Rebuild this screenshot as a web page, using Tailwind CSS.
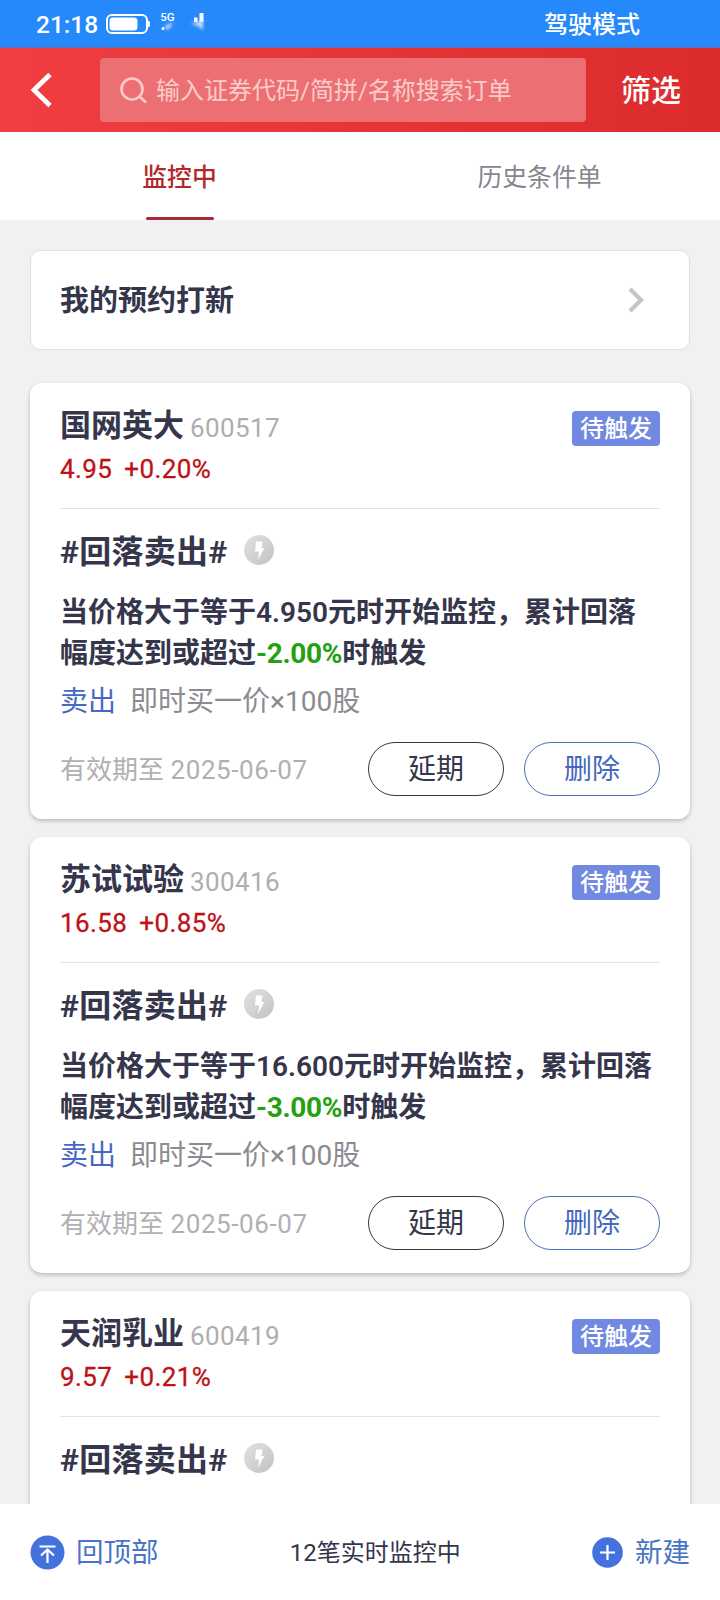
<!DOCTYPE html>
<html lang="zh-CN">
<head>
<meta charset="utf-8">
<meta name="viewport" content="width=720">
<title>条件单</title>
<script src="https://cdn.jsdelivr.net/npm/@tailwindcss/browser@4"></script>
</head>
<body class="w-[720px] h-[1600px] overflow-hidden bg-[#f1f0f2] flex flex-col font-[Roboto,'Noto_Sans_CJK_SC',sans-serif] text-[#35364b] whitespace-nowrap">

<!-- status bar -->
<header class="h-12 shrink-0 bg-[#2589fb] text-white flex items-center pl-9 pr-[80px] border-b border-[#5f6fb8]">
  <span class="pt-[3px] text-[24.500px] leading-none font-medium w-[70px]">21:18</span>
  <svg class="mt-px w-[46px] h-[22px]" viewBox="0 0 46 22" fill="none">
    <rect x="1" y="2" width="40" height="18" rx="5" stroke="#fff" stroke-width="2"/>
    <rect x="3.500" y="4.500" width="28" height="13" rx="3.500" fill="#fff"/>
    <path d="M42.500 8.500h.8v5h-.8z" fill="#fff" stroke="#fff"/>
  </svg>
  <svg class="ml-2 w-[50px] h-[28px]" viewBox="0 0 50 28">
    <defs><filter id="soft" x="-50%" y="-50%" width="200%" height="200%"><feGaussianBlur stdDeviation="1.600"/></filter></defs>
    <text x="0.300" y="11" font-size="11.500" font-weight="500" fill="#fff" font-family="Roboto">5G</text>
    <circle cx="3" cy="18.500" r="1.500" fill="#fff"/>
    <path d="M4 17 12 12 11 17 7 20z" fill="#b9d5f7" filter="url(#soft)"/>
    <path d="M34 7.500h3.500V12H34zM39.500 3h4v9h-4z" fill="#fff"/>
    <path d="M31 14 43 10 43 20 38 16z" fill="#c8dcf5" filter="url(#soft)"/>
  </svg>
  <span class="ml-auto pt-[2px] text-2xl leading-none font-medium">驾驶模式</span>
</header>

<!-- search bar -->
<div class="h-[84px] shrink-0 bg-linear-to-r from-[#f03e42] to-[#db2b2d] flex items-center">
  <div class="w-[100px] pl-[30px]">
    <svg class="w-6 h-9" viewBox="0 0 24 36" fill="none" stroke="#fff" stroke-width="4.800"><path d="M20 2.500 4 18l16 15.500"/></svg>
  </div>
  <div class="w-[486px] h-16 rounded bg-[#ec7073] flex items-center pl-[19px] text-[#fbccca]">
    <svg class="w-7 h-7 mr-[9px]" viewBox="0 0 28 28" fill="none" stroke="currentColor" stroke-width="2.600"><circle cx="13" cy="13" r="10.500"/><path d="m20.500 20.500 6.500 6"/></svg>
    <span class="pt-[2px] text-2xl leading-none">输入证券代码/简拼/名称搜索订单</span>
  </div>
  <span class="ml-[35px] pt-[2px] text-[30px] leading-none font-medium text-white">筛选</span>
</div>

<!-- tabs -->
<nav class="h-[88px] shrink-0 bg-white grid grid-cols-2 text-[24.800px]">
  <div class="flex flex-col items-center text-[#b3272b] font-medium">
    <span class="h-[85px] pr-px leading-[91px]">监控中</span>
    <i class="w-[68px] h-[3px] rounded-full bg-[#a82a38]"></i>
  </div>
  <div class="h-[88px] pr-px text-center text-[#85868f] leading-[91px]">历史条件单</div>
</nav>

<main class="flex-1 min-h-0 overflow-hidden pt-[30px] px-[30px]">
  <div class="h-[100px] mb-[33px] rounded-[10px] bg-white border border-[#dedee1] flex items-center justify-between pl-[29px] pr-[45px]">
    <span class="pt-[2px] text-[29px] leading-none font-bold">我的预约打新</span>
    <svg class="w-4 h-[26px]" viewBox="0 0 16 26" fill="none" stroke="#c5c5c7" stroke-width="4.200"><path d="m2 2 11 11L2 24"/></svg>
  </div>
  <div id="orders" class="flex flex-col gap-[18px]"></div>
</main>

<!-- bottom bar -->
<footer class="h-24 shrink-0 bg-white flex items-center justify-between px-[30px] text-[27.500px] leading-9 text-[#4a74c4]">
  <div class="flex items-center gap-[11px]">
    <svg class="w-[35px] h-[35px]" viewBox="0 0 35 35"><circle cx="17.500" cy="17.500" r="17" fill="#4472dd"/><path d="M9.500 11.500h16M17.500 28V15M11 20.500l6.500-6 6.500 6" fill="none" stroke="#fff" stroke-width="2.200"/></svg>
    <span class="pt-[2px]">回顶部</span>
  </div>
  <span class="pt-[2px] text-2xl leading-9 text-[#35364b]">12笔实时监控中</span>
  <div class="flex items-center gap-3">
    <svg class="w-[31px] h-[31px]" viewBox="0 0 31 31"><circle cx="15.500" cy="15.500" r="15.300" fill="#4472dd"/><path d="M8 15.500h15M15.500 8v15" stroke="#fff" stroke-width="2.200"/></svg>
    <span class="pt-[2px]">新建</span>
  </div>
</footer>

<template id="order">
  <article class="h-[436px] shrink-0 rounded-xl bg-white px-[30px] pt-[25px] shadow-[0_2px_4px_rgba(0,0,0,0.22)]">
    <div class="h-9 flex items-center">
      <span data-f="name" class="text-[31px] leading-9 font-bold"></span>
      <span data-f="code" class="ml-[6px] pt-[3px] text-[26px] leading-9 tracking-[0.4px] text-[#aeaeb1]"></span>
      <span class="ml-auto mt-[5px] w-[88px] h-[35px] rounded bg-[#7189e0] text-white text-2xl leading-[36px] font-medium text-center">待触发</span>
    </div>
    <div class="h-[64px] pt-[7px] text-[26px] leading-9 tracking-[0.4px] text-[#bd1218] [-webkit-text-stroke:0.3px_#bd1218] flex gap-3"><span data-f="price"></span><span data-f="change"></span></div>
    <div class="h-px bg-[#e2e2e4]"></div>
    <div class="h-[82px] flex items-center gap-[17px]">
      <span class="pt-[3px] text-[32px] leading-none tracking-[0.25px] font-bold">#回落卖出#</span>
      <svg class="w-[30px] h-[30px]" viewBox="0 0 30 30"><defs><linearGradient id="disc" x2="1" y2="1"><stop stop-color="#e2e2e3"/><stop offset="1" stop-color="#c2c2c4"/></linearGradient></defs><circle cx="15" cy="15" r="15" fill="url(#disc)"/><path d="M12 6.500h6.500L17.500 13h2.800L14 25l1.200-8.500H11z" fill="#fff"/></svg>
    </div>
    <p class="pt-px text-[28px] leading-[41px] font-bold">当价格大于等于<span data-f="trigger" class="font-semibold"></span>元时开始监控，累计回落<br>幅度达到或超过<span data-f="drop" class="text-[#25a010] tracking-[-0.3px]"></span>时触发</p>
    <div class="h-[53px] pt-[8px] text-[28px] leading-[40px] text-[#8b8b91] flex gap-[14px]"><span class="text-[#4668c4]">卖出</span><span>即时买一价×100股</span></div>
    <div class="mt-[15px] h-[54px] flex items-center gap-5">
      <span class="mr-auto pt-[2px] text-[26px] leading-9 text-[#b0b0b4]">有效期至 <span class="tracking-[0.6px]">2025-06-07</span></span>
      <button class="w-[136px] h-[54px] pt-[2px] rounded-full border border-[#35364b] text-[28px] leading-9">延期</button>
      <button class="w-[136px] h-[54px] pt-[2px] rounded-full border border-[#4f6fba] text-[#4567bd] text-[28px] leading-9">删除</button>
    </div>
  </article>
</template>

<script>
const orders = [
  { name: '国网英大', code: '600517', price: '4.95', change: '+0.20%', trigger: '4.950', drop: '-2.00%' },
  { name: '苏试试验', code: '300416', price: '16.58', change: '+0.85%', trigger: '16.600', drop: '-3.00%' },
  { name: '天润乳业', code: '600419', price: '9.57', change: '+0.21%', trigger: '9.570', drop: '-2.00%' },
];
const list = document.getElementById('orders');
for (const order of orders) {
  const card = document.getElementById('order').content.cloneNode(true);
  card.querySelectorAll('[data-f]').forEach(el => { el.textContent = order[el.dataset.f]; });
  list.append(card);
}
list.lastElementChild.querySelectorAll('p, p ~ div').forEach(el => el.classList.add('invisible'));
</script>
</body>
</html>
